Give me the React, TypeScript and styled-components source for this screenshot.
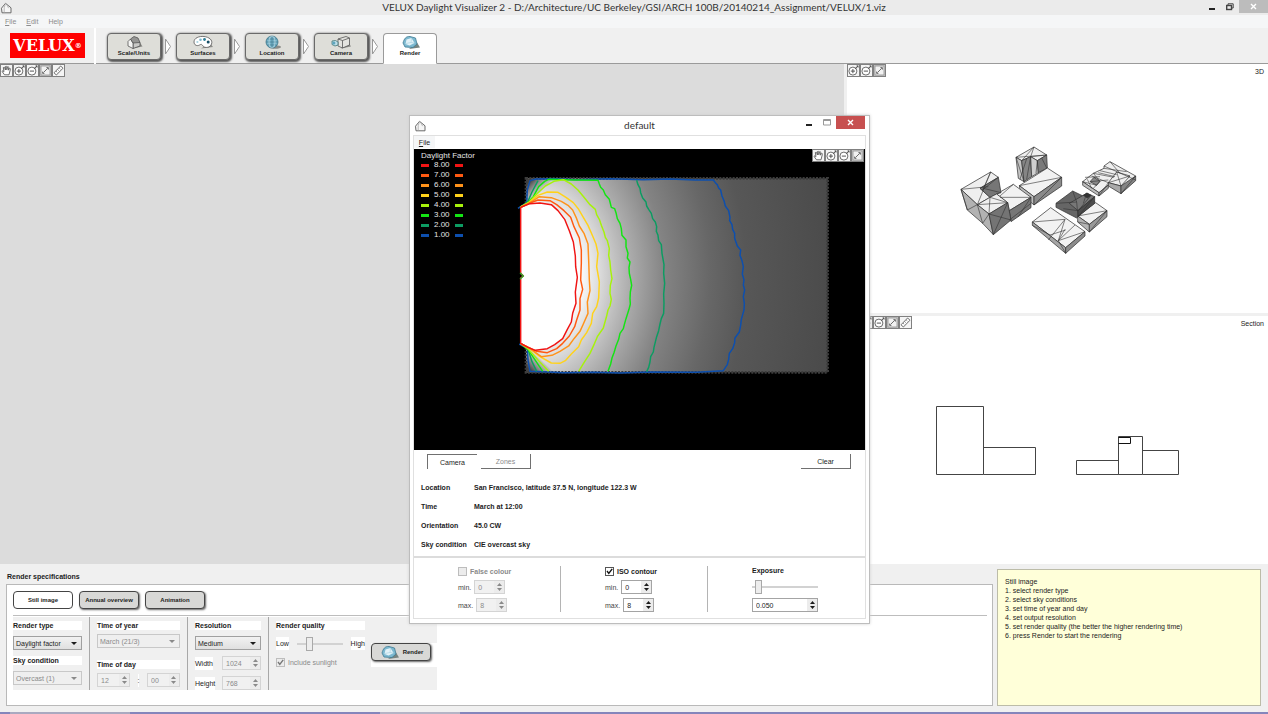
import React from "react";
import styled, { createGlobalStyle, css } from "styled-components";

const sans = `"Liberation Sans", Arial, sans-serif`;
const titleFont = `Lato, "Open Sans", sans-serif`;

const GlobalStyle = createGlobalStyle`
  *, *::before, *::after { box-sizing: border-box; }
  body { margin: 0; background: #f0f0f0; font-family: ${sans}; font-size: 7px; line-height: 9px; color: #1c1c1c; }
  button, input, select { font: inherit; color: inherit; margin: 0; padding: 0; border: 0; border-radius: 0; background: none; }
  svg { display: block; }
  h1, h2, h3, p, ol, ul, dl, dd { margin: 0; padding: 0; font: inherit; }
`;

/* ---------- frame ---------- */

const Page = styled.div`
  position: relative;
  min-height: 100vh;
  display: flex;
  flex-direction: column;
`;

const TitleBar = styled.header`
  display: grid;
  grid-template-columns: 90px 1fr 90px;
  align-items: center;
  height: 15px;
  background: #ebebeb;
`;

const WindowTitle = styled.h1`
  font-family: ${titleFont};
  font-size: 10px;
  line-height: 15px;
  text-align: center;
  color: #333;
`;

const WindowControls = styled.div`
  display: flex;
  justify-content: flex-end;
  align-self: start;
`;

const WindowButton = styled.button<{ $close?: "active" | "idle" }>`
  width: ${(p) => (p.$close ? 29 : 18)}px;
  height: 13px;
  display: flex;
  align-items: center;
  justify-content: center;
  background: ${(p) => (p.$close === "active" ? "#c75050" : p.$close ? "#bcbcbc" : "none")};
`;

const MenuBar = styled.nav`
  display: flex;
  align-items: center;
  gap: 10px;
  height: 13px;
  padding: 0 5px;
  background: #f5f6f7;
`;

const MenuItem = styled.button<{ $plain?: boolean }>`
  color: #8d8d8d;
  &::first-letter { text-decoration: ${(p) => (p.$plain ? "none" : "underline")}; }
`;

const Ribbon = styled.nav`
  display: flex;
  height: 36px;
  background: linear-gradient(#9a9a9a, #9a9a9a) bottom / 100% 1px no-repeat #f0f0f0;
`;

const LogoArea = styled.div`
  width: 96px;
  padding: 5px 0 0 10px;
  border-right: 2px solid #fff;
`;

const Logo = styled.div`
  display: flex;
  align-items: center;
  justify-content: center;
  width: 75px;
  height: 25px;
  background: #ff0000;
  color: #fff;
  font-family: "DejaVu Serif", serif;
  font-weight: 700;
  font-size: 16px;
  line-height: 25px;
`;

const Registered = styled.span`
  font-size: 7px;
  line-height: 9px;
`;

const Steps = styled.ol`
  display: flex;
  list-style: none;
  padding: 5px 0 0 11px;
`;

const Step = styled.li`
  display: flex;
`;

const Arrow = styled.svg`
  margin: 5px 5px 0 4px;
`;

const StepButton = styled.button<{ $active?: boolean }>`
  display: flex;
  flex-direction: column;
  align-items: center;
  width: 54px;
  height: 27px;
  padding-top: 1px;
  border: 1px solid #6a6a6a;
  border-radius: 4px;
  background: #deded9;
  box-shadow: 1px 1px 2px 1px #555;
  font-size: 6px;
  font-weight: 700;
  line-height: 7px;
  ${(p) =>
    p.$active &&
    css`
      height: 31px;
      background: #fff;
      border-color: #9a9a9a;
      border-bottom-color: #fff;
      border-radius: 4px 4px 0 0;
      box-shadow: none;
    `}
`;

/* ---------- workspace ---------- */

const Workspace = styled.main`
  display: grid;
  grid-template-columns: 1fr 421px;
  column-gap: 3px;
  flex: 1;
`;

const PlanPane = styled.section`
  background: #dcdcdc;
`;

const SidePanes = styled.div`
  display: grid;
  grid-template-rows: 249px 1fr;
  row-gap: 3px;
`;

const ViewPane = styled.section`
  position: relative;
  background: #fff;
`;

const ViewHeader = styled.div`
  position: absolute;
  inset: 0 4px auto 0;
  display: flex;
  justify-content: space-between;
`;

const ViewName = styled.h2`
  padding-top: 3px;
`;

const ToolRow = styled.div`
  display: flex;
`;

const ToolButton = styled.button<{ $on?: boolean }>`
  width: 13px;
  height: 13px;
  border: 1px solid #808080;
  background: ${(p) => (p.$on ? "#c4c4c4" : "#f4f4f4")};
`;

/* ---------- shared controls ---------- */

const SelectBox = styled.div<{ $disabled?: boolean }>`
  display: grid;
  align-items: center;
  height: 14px;
  border: 1px solid ${(p) => (p.$disabled ? "#c8c8c8" : "#a0a0a0")};
  background: ${(p) => (p.$disabled ? "#efefef" : "linear-gradient(#f2f2f2, #e0e0e0)")};
  color: ${(p) => (p.$disabled ? "#8a8a8a" : "#1c1c1c")};
  svg { grid-area: 1 / 1; justify-self: end; margin-right: 4px; pointer-events: none; }
`;

const NativeSelect = styled.select`
  grid-area: 1 / 1;
  width: 100%;
  height: 12px;
  padding-left: 2px;
  appearance: none;
  opacity: 1;
`;

const SpinBox = styled.span<{ $disabled?: boolean; $width: number }>`
  display: flex;
  width: ${(p) => p.$width}px;
  height: 14px;
  border: 1px solid ${(p) => (p.$disabled ? "#d4d4d4" : "#a4a4a4")};
  background: ${(p) => (p.$disabled ? "#f1f1f1" : "#fff")};
  color: ${(p) => (p.$disabled ? "#8a8a8a" : "#1c1c1c")};
`;

const SpinInput = styled.input`
  flex: 1;
  min-width: 0;
  padding-left: 3px;
  appearance: textfield;
  &::-webkit-inner-spin-button { appearance: none; margin: 0; }
`;

const SpinArrows = styled.span`
  display: flex;
  flex-direction: column;
  justify-content: center;
  gap: 2px;
  width: 10px;
  align-items: center;
  background: #ececec;
`;

const CheckLabel = styled.label<{ $disabled?: boolean; $bold?: boolean }>`
  display: flex;
  align-items: center;
  gap: 3px;
  height: 10px;
  font-weight: ${(p) => (p.$bold ? 700 : 400)};
  color: ${(p) => (p.$disabled ? "#8a8a8a" : "#1c1c1c")};
`;

const CheckMark = styled.span<{ $disabled?: boolean }>`
  display: grid;
  width: 9px;
  height: 9px;
  border: 1px solid ${(p) => (p.$disabled ? "#bdbdbd" : "#555")};
  background: ${(p) => (p.$disabled ? "#ececec" : "#fff")};
  input { grid-area: 1 / 1; width: 7px; height: 7px; appearance: none; }
  svg { grid-area: 1 / 1; pointer-events: none; }
`;

const Slider = styled.input<{ $width: number }>`
  width: ${(p) => p.$width}px;
  height: 15px;
  appearance: none;
  background: linear-gradient(#d2d2d2, #d2d2d2) center / 100% 2px no-repeat;
  &::-webkit-slider-thumb {
    appearance: none;
    width: 7px;
    height: 14px;
    border: 1px solid #a9a9a9;
    background: #ededed;
  }
`;

/* ---------- render specifications ---------- */

const SpecArea = styled.section`
  display: grid;
  grid-template-columns: 1fr 264px;
  column-gap: 4px;
  height: 148px;
  padding: 5px 7px 6px 6px;
`;

const SpecColumn = styled.div`
  display: flex;
  flex-direction: column;
`;

const SpecTitle = styled.h2`
  padding: 3px 0 3px 1px;
  font-weight: 700;
`;

const SpecBox = styled.div`
  flex: 1;
  padding: 6px 5px 0 6px;
  border: 1px solid #b9b9b9;
  background: #fff;
`;

const ModeRow = styled.div`
  display: flex;
  gap: 6px;
  padding-bottom: 6px;
  margin-bottom: 1px;
  border-bottom: 1px solid #bdbdbd;
`;

const RoundButton = styled.button<{ $pressed?: boolean }>`
  display: flex;
  align-items: center;
  justify-content: center;
  gap: 4px;
  width: 60px;
  height: 18px;
  border: 1px solid #444;
  border-radius: 4px;
  background: ${(p) => (p.$pressed ? "#fff" : "#d8d8d6")};
  box-shadow: ${(p) => (p.$pressed ? "none" : "1px 1px 2px #666")};
  font-size: 6px;
  font-weight: 700;
`;

const Groups = styled.div`
  display: flex;
  width: fit-content;
  height: 73px;
  background: #f0f0f0;
`;

const Group = styled.div<{ $width: number; $first?: boolean }>`
  display: flex;
  flex-direction: column;
  width: ${(p) => p.$width}px;
  padding: 4px 7px 0 ${(p) => (p.$first ? 0 : 7)}px;
  border-right: 1px solid #a8a8a8;
`;

const QualityGroup = styled.div`
  padding: 4px 0 0 7px;
`;

const SelectSlot = styled.div`
  margin-bottom: 6px;
`;

const GroupLabel = styled.h3<{ $gap?: number }>`
  height: 9px;
  margin-bottom: ${(p) => p.$gap ?? 6}px;
  background: #fff;
  font-weight: 700;
  white-space: nowrap;
`;

const Separator = styled.div`
  height: 1px;
  margin: 4px 0 8px;
  background: #a8a8a8;
`;

const FieldRow = styled.div`
  display: flex;
  justify-content: space-between;
  align-items: center;
  margin-bottom: 6px;
`;

const WhiteLabel = styled.label`
  padding: 2px 0;
  background: #fff;
`;

const QualityBody = styled.div`
  display: flex;
  gap: 6px;
`;

const QualityColumn = styled.div`
  width: 89px;
`;

const RenderSlot = styled.div`
  width: 66px;
  height: 24px;
  margin-top: 22px;
  background: #fff;
`;

const HelpNote = styled.aside`
  padding: 7px;
  border: 1px solid #bcbca8;
  background: #ffffd9;
`;

const TaskStrip = styled.div`
  height: 2px;
  background: linear-gradient(90deg, #8585bb 10px, #a9a9c0 10px 130px, #8585bb 130px 380px, #b4b4c6 380px 460px, #8585bb 460px);
`;

/* ---------- result window ---------- */

const ResultWindow = styled.section`
  position: absolute;
  top: 115px;
  left: 409px;
  width: 461px;
  padding: 0 4px 4px;
  border: 1px solid #bdbdbd;
  background: #fff;
  box-shadow: 0 0 3px #d0d0d0;
`;

const ResultTitleBar = styled.header`
  display: grid;
  grid-template-columns: 66px 1fr 66px;
  align-items: center;
  height: 19px;
  h2 {
    font-family: ${titleFont};
    font-size: 10px;
    text-align: center;
    color: #333;
  }
`;

const ResultBody = styled.div`
  border: solid #e0e0e0;
  border-width: 1px 0;
  box-shadow: 1px 0 0 #e0e0e0, -1px 0 0 #e0e0e0;
`;

const ResultMenu = styled.nav`
  height: 13px;
  button {
    width: 21px;
    height: 12px;
    background: #f5f6f7;
    &::first-letter { text-decoration: underline; }
  }
`;

const RenderView = styled.div`
  position: relative;
  background: #000;
  svg { max-width: 100%; }
`;

const ViewTools = styled.div`
  position: absolute;
  top: 0;
  right: 1px;
`;

const Legend = styled.div`
  position: absolute;
  top: 3px;
  left: 7px;
  color: #e4e4e4;
  font-size: 8px;
  line-height: 8px;
  white-space: nowrap;
`;

const LegendRow = styled.div<{ $color: string }>`
  display: flex;
  align-items: center;
  gap: 5px;
  height: 10px;
  &::before, &::after {
    content: "";
    width: 8px;
    height: 3px;
    margin-top: 1px;
    background: ${(p) => p.$color};
  }
`;

const TabRow = styled.div`
  display: flex;
  gap: 4px;
  padding: 4px 14px 0 13px;
`;

const FlatButton = styled.button<{ $sunken?: boolean; $muted?: boolean; $end?: boolean }>`
  width: 50px;
  height: 15px;
  border: solid #707070;
  border-width: ${(p) => (p.$sunken ? "1px 0 0 1px" : "0 1px 1px 0")};
  color: ${(p) => (p.$muted ? "#8a8a8a" : "#1c1c1c")};
  margin-left: ${(p) => (p.$end ? "auto" : 0)};
`;

const Facts = styled.dl`
  display: grid;
  grid-template-columns: 53px 1fr;
  row-gap: 10px;
  padding: 14px 7px 7px;
  border-bottom: 2px solid #dcdcdc;
  font-weight: 700;
  white-space: nowrap;
`;

const Adjustments = styled.div`
  display: grid;
  grid-template-columns: 147px 147px 1fr;
  padding: 8px 0 6px;
  height: 60px;
`;

const AdjustColumn = styled.div<{ $last?: boolean }>`
  display: flex;
  flex-direction: column;
  gap: 4px;
  height: 46px;
  padding-left: 44px;
  border-right: ${(p) => (p.$last ? 0 : 1)}px solid #b4b4b4;
  h3 { font-weight: 700; }
`;

const AdjustField = styled.label`
  display: flex;
  align-items: center;
  gap: 3px;
  height: 14px;
  color: #444;
`;

/* ---------- icons ---------- */

const HouseIcon = () => (
  <svg width="13" height="12" viewBox="0 0 13 12" fill="#f6f6f6" stroke="#6a6a6a">
    <path d="M1.5 6.2 5.5 1.3 11 5.8V10.8H2Z" />
    <path d="M5.5 1.3 4.2 5.8V10.6M7 3 8.6 6.2" stroke="#aaa" strokeWidth=".8" />
  </svg>
);

type ToolKind = "hand" | "plus" | "minus" | "fit" | "ruler";

const ToolIcon = ({ kind }: { kind: ToolKind }) => (
  <svg width="11" height="11" viewBox="0 0 11 11" fill="none" stroke="#5c5c5c" strokeWidth=".9">
    {kind === "hand" && (
      <path d="M3.5 9.8 1 6.3Q1.6 5.2 3 6.6L2.3 2.6Q3.2 1.6 3.8 3L4.4 5 4.4 1.6Q5.3.8 5.8 1.8V4.8L6.5 1.8Q7.5 1.3 7.7 2.3L7.4 5.2 8.6 3.4Q9.7 3.3 9.3 4.6L8 9.8Z" fill="#fff" />
    )}
    {(kind === "plus" || kind === "minus") && (
      <>
        <circle cx="4.9" cy="6.1" r="4" fill="#fff" />
        <path d="M2.8 6.1H7M7.2 3.8 10 .8M8.6 .9H10V2.6" stroke="#444" />
        {kind === "plus" && <path d="M4.9 4V8.2" stroke="#444" />}
      </>
    )}
    {kind === "fit" && (
      <>
        <rect x="1" y="1" width="9" height="9" fill="#f2f2f2" stroke="#999" />
        <path d="M3.4 7.6 7.8 3.2M6.4 2.6H8.4V4.6M2.6 6.6V8.4H4.4" />
      </>
    )}
    {kind === "ruler" && (
      <>
        <path d="M1 7.8 7.6 1 10 3.2 3.4 10Z" fill="#fff" />
        <path d="M3 6.2 4.2 7.2M4.6 4.6 5.8 5.6M6.2 3 7.4 4" strokeWidth=".7" />
      </>
    )}
  </svg>
);

const toolNames: Record<ToolKind, string> = {
  hand: "Pan",
  plus: "Zoom in",
  minus: "Zoom out",
  fit: "Fit view",
  ruler: "Measure",
};

const Tools = ({ kinds }: { kinds: ToolKind[] }) => (
  <ToolRow>
    {kinds.map((k) => (
      <ToolButton key={k} $on={k === "fit"} aria-label={toolNames[k]}>
        <ToolIcon kind={k} />
      </ToolButton>
    ))}
  </ToolRow>
);

const StepIcon = ({ name }: { name: string }) => (
  <svg width="20" height="15" viewBox="0 0 20 15" stroke="#555" strokeWidth=".8" fill="none">
    {name === "Scale/Units" && (
      <>
        <path d="M9 13.5 18.5 11.5 16 7.5Z" fill="#8c8c88" stroke="none" />
        <path d="M9 8 12 4.5 16 7.5V11L9 13.5Z" fill="#c9c9c6" />
        <path d="M4 6.5 6.5 4 9 8V13.5L4 11Z" fill="#f4f4f2" />
        <path d="M6.5 4 10 1.5 14 3 16 7.5 9 8Z" fill="#959593" />
      </>
    )}
    {name === "Surfaces" && (
      <>
        <path d="M8 13.5 20 12 17 8Z" fill="#8c8c88" stroke="none" />
        <path d="M1 7C1 3 6 1 11 1.5S20 5 18.5 9 12 13 10.5 11.5 9 8.5 6.5 10 1 10 1 7Z" fill="#fff" />
        <g stroke="none" fill="#2f7f98">
          <circle cx="7.5" cy="4.8" r="1.3" fill="#7bb8cc" />
          <circle cx="11.5" cy="4.5" r="1.4" />
          <circle cx="15.2" cy="7" r="1.5" fill="#174f66" />
          <circle cx="4.4" cy="7" r="1.1" fill="#a7d3e0" />
        </g>
      </>
    )}
    {name === "Location" && (
      <>
        <ellipse cx="13" cy="12" rx="6" ry="1.8" fill="#8c8c88" stroke="none" />
        <circle cx="10" cy="7" r="6" fill="#78b4c9" stroke="#3b7488" />
        <path d="M4 7H16M10 1V13M5 4H15M5 10H15" stroke="#3b7488" strokeWidth=".6" />
        <ellipse cx="10" cy="7" rx="3" ry="6" stroke="#d6ecf3" strokeWidth=".6" />
      </>
    )}
    {name === "Camera" && (
      <>
        <path d="M10 13.5 20 11.5 18 8Z" fill="#8c8c88" stroke="none" />
        <path d="M7 4 15 1.5 18.5 3V10L11.5 13 7 11Z" fill="#e4e4e0" />
        <path d="M7 4 11.5 5.5V13M11.5 5.5 18.5 3" />
        <path d="M1 6 4.5 5.5 7 7V10L4 11 1 9.5Z" fill="#bcdde8" stroke="#477" />
        <circle cx="2.8" cy="8" r="1.6" fill="#5ea5bd" stroke="none" />
      </>
    )}
    {name === "Render" && (
      <>
        <path d="M9 14 20 12.5 17 7.5Z" fill="#77837f" stroke="none" />
        <path d="M3 8C4 4 6 1 10 1.5L15.5 3 17 9 13 12.5 5 12Z" fill="#7db9d0" stroke="#3d7a92" />
        <path d="M6.5 4.5 11.5 3 14.5 8 9.5 10.5 5.5 9Z" fill="#e2f2f8" stroke="none" />
        <path d="M11.5 3 11 7.5 14.5 8M11 7.5 6 8.5" stroke="#a5cfde" strokeWidth=".6" />
      </>
    )}
  </svg>
);

const Caret = () => (
  <svg width="6" height="3" viewBox="0 0 6 3" fill="currentColor"><path d="M0 0H6L3 3Z" /></svg>
);

const Dropdown = ({ label, value, disabled }: { label: string; value: string; disabled?: boolean }) => (
  <SelectBox $disabled={disabled}>
    <NativeSelect aria-label={label} disabled={disabled} defaultValue={value}>
      <option>{value}</option>
    </NativeSelect>
    <Caret />
  </SelectBox>
);

const Spin = ({ id, label, value, width, disabled }: { id: string; label?: string; value: string; width: number; disabled?: boolean }) => (
  <SpinBox $disabled={disabled} $width={width}>
    <SpinInput id={id} aria-label={label} type="number" step="any" defaultValue={value} disabled={disabled} />
    <SpinArrows>
      <svg width="5" height="3" viewBox="0 0 5 3" fill="currentColor"><path d="M0 3 2.5 0 5 3Z" /></svg>
      <svg width="5" height="3" viewBox="0 0 5 3" fill="currentColor"><path d="M0 0 2.5 3 5 0Z" /></svg>
    </SpinArrows>
  </SpinBox>
);

const Check = ({ text, checked, disabled, bold }: { text: string; checked?: boolean; disabled?: boolean; bold?: boolean }) => (
  <CheckLabel $disabled={disabled} $bold={bold}>
    <CheckMark $disabled={disabled}>
      <input type="checkbox" defaultChecked={checked} disabled={disabled} />
      {checked && (
        <svg width="7" height="7" viewBox="0 0 7 7" fill="none" stroke={disabled ? "#777" : "#111"} strokeWidth="1.4">
          <path d="M1 3 2.8 5.4 6.2 .8" />
        </svg>
      )}
    </CheckMark>
    {text}
  </CheckLabel>
);

const Minimize = () => (
  <svg width="7" height="7" viewBox="0 0 7 7"><path d="M0 6H6" stroke="#222" strokeWidth="2" /></svg>
);
const Cross = () => (
  <svg width="7" height="7" viewBox="0 0 7 7"><path d="M1 1 6 6M6 1 1 6" stroke="#fff" strokeWidth="1.4" /></svg>
);
const Maximize = () => (
  <svg width="8" height="7" viewBox="0 0 8 7"><path d="M.5 .5H7.5V6H.5ZM.5 1.5H7.5" fill="none" stroke="#999" /></svg>
);
const Restore = () => (
  <svg width="8" height="8" viewBox="0 0 8 8" fill="none" stroke="#444">
    <path d="M2 2V.8H7.2V5H6" />
    <rect x=".7" y="2.5" width="4.8" height="4" strokeWidth="1.4" />
  </svg>
);

/* ---------- drawings ---------- */

const contours: { color: string; d: string }[] = [
  { color: "#0d4fae", d: "M24 115 50 98 52 60 60 32 78 27 130 26 200 29 300 26 400 29 480 27 555 30 610 30 616 38 622 44 626 54 632 60 636 78 642 92 646 108 656 122 660 142 659 152 666 164 668 178 674 190 674 205 682 228 692 240 690 256 696 272 700 290 697 312 702 330 700 345 704 360 700 380 703 400 702 420 694 448 692 466 688 486 675 504 674 518 668 536 658 550 656 568 652 584 640 602 560 607 420 606 330 609 250 607 160 608 100 605 60 604 54 570 52 536 28 522" },
  { color: "#0c9c62", d: "M380 31 384 44 390 55 392 68 398 84 408 96 410 108 416 118 424 130 428 146 436 156 440 170 439 184 444 196 446 212 454 224 456 250 462 284 461 310 464 340 461 372 462 400 461 430 454 446 450 462 446 482 440 500 432 532 430 546 422 560 420 576 416 592 410 605" },
  { color: "#0c9c62", d: "M32 112 52 98 66 66 84 32M36 522 54 538 66 575 80 604" },
  { color: "#13e413", d: "M30 112 52 99 70 80 86 50 104 34 116 28 190 30 264 31 268 42 272 52 280 60 286 74 298 88 300 96 304 112 314 116 318 128 322 146 330 160 334 176 336 196 348 210 348 230 354 250 352 264 360 276 357 292 358 310 362 328 365 346 361 366 360 386 361 402 357 418 348 446 344 460 340 476 330 490 326 508 318 528 312 548 306 564 302 582 294 604M34 522 54 538 70 562 98 604" },
  { color: "#a6f20b", d: "M32 111 56 98 80 72 106 48 132 34 160 29 184 42 204 60 222 82 240 104 256 118 260 134 268 148 274 166 282 186 286 202 292 212 298 236 296 256 300 276 302 300 306 326 301 346 300 370 304 388 300 408 294 420 290 438 280 474 262 500 252 524 240 550 222 578 206 604M32 522 54 536 84 570 116 604" },
  { color: "#ffd21a", d: "M32 111 56 98 84 76 112 66 144 67 168 82 190 98 206 118 220 142 234 166 248 198 258 222 264 250 260 290 268 336 266 384 260 410 248 430 244 460 230 488 214 510 206 530 184 552 166 572 150 580 124 579 90 560 60 536 32 521" },
  { color: "#ff921a", d: "M32 112 60 98 88 80 124 83 154 94 174 106 188 120 200 146 208 168 222 190 234 222 236 270 238 330 240 362 232 396 234 430 220 462 210 484 192 506 176 528 150 544 126 556 94 560 60 536 34 522" },
  { color: "#ff5a12", d: "M32 112 60 99 84 90 120 92 140 104 162 122 182 142 192 170 208 204 214 240 214 280 212 330 218 358 210 386 210 420 200 450 194 470 178 498 158 520 140 536 112 548 80 544 56 532 34 522" },
  { color: "#f01414", d: "M32 112 60 101 90 99 124 104 144 122 164 148 178 182 190 216 196 258 197 290 202 322 196 366 198 400 188 430 184 456 172 478 158 506 134 524 112 536 76 541 54 532 32 520V324L40 318 32 310V112" },
];

const ContourRender = () => (
  <svg width="451" height="301" viewBox="0 0 451 301" role="img" aria-label="Daylight factor contours">
    <defs>
      <radialGradient id="field" gradientUnits="userSpaceOnUse" cx="0" cy="0" r="900" gradientTransform="translate(60 315) scale(1 1.25)">
        <stop offset=".16" stopColor="#fff" />
        <stop offset=".21" stopColor="#e6e6e6" />
        <stop offset=".27" stopColor="#c8c8c8" />
        <stop offset=".34" stopColor="#aaa" />
        <stop offset=".45" stopColor="#838383" />
        <stop offset=".6" stopColor="#676767" />
        <stop offset=".72" stopColor="#575757" />
        <stop offset="1" stopColor="#4b4b4b" />
      </radialGradient>
      <linearGradient id="cornerTop" x1="0" y1="0" x2=".6" y2=".6">
        <stop offset=".2" stopColor="#444" />
        <stop offset="1" stopColor="#999" stopOpacity="0" />
      </linearGradient>
      <linearGradient id="cornerBottom" x1="0" y1="1" x2=".6" y2=".4">
        <stop offset=".2" stopColor="#444" />
        <stop offset="1" stopColor="#999" stopOpacity="0" />
      </linearGradient>
    </defs>
    <g transform="translate(96 21) scale(.33333)">
      <rect x="48" y="25" width="905" height="582" fill="url(#field)" />
      <path d="M48 25H130L48 110Z" fill="url(#cornerTop)" />
      <path d="M48 607H130L48 525Z" fill="url(#cornerBottom)" />
      <rect x="48" y="25" width="905" height="582" fill="none" stroke="#3c3c3c" strokeWidth="8" strokeDasharray="6 4" />
      <path d={contours[8].d} fill="#fff" />
      {contours.map((c, i) => (
        <path key={i} d={c.d} fill="none" stroke={c.color} strokeWidth="4.4" strokeLinejoin="round" />
      ))}
      <path d="M30 308 40 318 30 328" fill="none" stroke="#2fae2f" strokeWidth="4" />
    </g>
  </svg>
);

const faces: [string, string][] = [
  ["#efefef", "198,52 252,21 290,45 262,62 242,50 215,62"],
  ["#c4c4c4", "198,52 215,62 222,125 205,115"],
  ["#858585", "215,62 242,50 245,110 222,125"],
  ["#cfcfcf", "242,50 262,62 265,98 245,110"],
  ["#7a7a7a", "262,62 290,45 292,84 265,98"],
  ["#f2f2f2", "208,137 292,84 335,112 252,170"],
  ["#bdbdbd", "208,137 252,170 252,195 212,160"],
  ["#8a8a8a", "252,170 335,112 335,138 252,195"],
  ["#f2f2f2", "140,162 190,133 243,172 178,212 173,188"],
  ["#777777", "178,212 243,172 243,203 183,245"],
  ["#efefef", "33,148 122,96 145,112 90,145 120,172 82,194"],
  ["#767676", "145,112 153,158 140,162 120,172 90,145"],
  ["#efefef", "120,172 140,162 173,188 117,222 82,194"],
  ["#b2b2b2", "33,148 82,194 117,222 130,284 98,250 52,210"],
  ["#747474", "117,222 173,188 183,240 130,284"],
  ["#f2f2f2", "247,246 302,203 405,275 347,323"],
  ["#a6a6a6", "247,246 347,323 347,340 247,256"],
  ["#8c8c8c", "347,323 405,275 405,288 347,340"],
  ["#f2f2f2", "383,228 437,188 471,212 418,253"],
  ["#b4b4b4", "383,228 418,253 418,276 383,246"],
  ["#999999", "418,253 471,212 471,230 418,276"],
  ["#666666", "318,190 368,153 434,185 380,234 318,202"],
  ["#777777", "358,190 410,160 434,170 384,212"],
  ["#4c4c4c", "384,212 434,170 434,190 384,230"],
  ["#333333", "400,166 411,159 424,166 412,174"],
  ["#efefef", "398,125 430,100 462,85 462,78 480,65 557,108 515,150 475,135 447,158"],
  ["#bdbdbd", "398,125 447,158 447,168 398,136"],
  ["#a0a0a0", "447,158 475,135 475,145 447,168"],
  ["#eeeeee", "475,128 500,96 540,108 513,138"],
  ["#aaaaaa", "475,128 513,138 513,161 475,138"],
  ["#858585", "513,138 557,108 557,122 513,161"],
  ["#888888", "420,125 432,112 450,124 440,136"],
];

const creases =
  "M33 148 115 140M122 96 82 194M122 96 98 150M33 148 52 210M52 210 82 194 98 250M82 194 173 188M120 172 117 222 98 250M120 172 173 188M117 222 183 240M173 188 130 284M145 112 97 150M153 158 100 145M190 133 150 168M150 172 243 172M178 240 243 190M243 172 205 230M252 21 242 50M252 21 215 62M198 52 290 45M242 50 290 45M198 52 222 125M230 56 210 118M242 50 230 118M262 62 258 100M275 54 290 84M208 137 335 112M252 195 335 112M247 246 345 238 295 300M345 238 325 302 405 275M375 255 325 302 345 268M300 285 347 270M325 302 347 340M247 256 300 285M383 228 471 212M418 276 471 212M383 246 418 253M318 190 380 186 368 153M340 206 384 212M380 186 384 230M384 230 434 170M400 190 410 160M384 212 420 170M462 78 557 120M480 65 510 100M462 85 530 95M450 92 500 104M445 98 495 110M430 100 492 112M425 108 475 128M500 96 513 138M475 128 540 108M513 161 557 108M420 125 475 120M398 125 440 136M450 124 430 145M430 100 450 124M412 118 425 145M447 168 475 128M405 112 450 110";

const Model3D = () => (
  <svg width="421" height="249" viewBox="0 0 421 249" role="img" aria-label="3D model">
    <g transform="translate(103 76) scale(.33333)" stroke="#333" strokeWidth="2.2" strokeLinejoin="round">
      {faces.map(([fill, points], i) => (
        <polygon key={i} fill={fill} points={points} />
      ))}
      <path d={creases} fill="none" strokeWidth="1.8" />
    </g>
  </svg>
);

const SectionDrawing = () => (
  <svg width="421" height="248" viewBox="0 0 421 248" role="img" aria-label="Section drawing" fill="none" stroke="#444">
    <path d="M89.5 90.5H136.5V158.5H89.5ZM136.5 131.5H188.5V158.5H136.5" />
    <path d="M229.5 144.5H271.5V158.5H229.5ZM271.5 120.5H295.5V158.5H271.5ZM295.5 134.5H331.5V158.5H295.5" />
    <path d="M271.5 121.5H283.5V127.5H271.5" stroke="#111" />
  </svg>
);

/* ---------- data ---------- */

const steps = ["Scale/Units", "Surfaces", "Location", "Camera", "Render"];

const legend: [string, string][] = [
  ["8.00", "#f01414"],
  ["7.00", "#ff5a12"],
  ["6.00", "#ff921a"],
  ["5.00", "#ffd21a"],
  ["4.00", "#a6f20b"],
  ["3.00", "#13e413"],
  ["2.00", "#0c9c62"],
  ["1.00", "#0d4fae"],
];

const facts: [string, string][] = [
  ["Location", "San Francisco, latitude 37.5 N, longitude 122.3 W"],
  ["Time", "March at 12:00"],
  ["Orientation", "45.0 CW"],
  ["Sky condition", "CIE overcast sky"],
];

const help = [
  "Still image",
  "1. select render type",
  "2. select sky conditions",
  "3. set time of year and day",
  "4. set output resolution",
  "5. set render quality (the better the higher rendering time)",
  "6. press Render to start the rendering",
];

/* ---------- app ---------- */

const ResultDialog = () => (
  <ResultWindow>
    <ResultTitleBar>
      <HouseIcon />
      <h2>default</h2>
      <WindowControls>
        <WindowButton aria-label="Minimize"><Minimize /></WindowButton>
        <WindowButton aria-label="Maximize"><Maximize /></WindowButton>
        <WindowButton $close="active" aria-label="Close"><Cross /></WindowButton>
      </WindowControls>
    </ResultTitleBar>
    <ResultBody>
      <ResultMenu><button>File</button></ResultMenu>
      <RenderView>
        <ContourRender />
        <Legend>
          <div>Daylight Factor</div>
          {legend.map(([value, color]) => (
            <LegendRow key={value} $color={color}>{value}</LegendRow>
          ))}
        </Legend>
        <ViewTools><Tools kinds={["hand", "plus", "minus", "fit"]} /></ViewTools>
      </RenderView>
      <TabRow>
        <FlatButton $sunken>Camera</FlatButton>
        <FlatButton $muted>Zones</FlatButton>
        <FlatButton $end>Clear</FlatButton>
      </TabRow>
      <Facts>
        {facts.map(([k, v]) => (
          <React.Fragment key={k}>
            <dt>{k}</dt>
            <dd>{v}</dd>
          </React.Fragment>
        ))}
      </Facts>
      <Adjustments>
        <AdjustColumn>
          <Check text="False colour" disabled bold />
          <AdjustField>min. <Spin id="fc-min" value="0" width={31} disabled /></AdjustField>
          <AdjustField>max. <Spin id="fc-max" value="8" width={31} disabled /></AdjustField>
        </AdjustColumn>
        <AdjustColumn>
          <Check text="ISO contour" checked bold />
          <AdjustField>min. <Spin id="iso-min" value="0" width={31} /></AdjustField>
          <AdjustField>max. <Spin id="iso-max" value="8" width={31} /></AdjustField>
        </AdjustColumn>
        <AdjustColumn $last>
          <h3>Exposure</h3>
          <Slider $width={66} type="range" min="0" max="100" defaultValue="5" aria-label="Exposure" />
          <Spin id="exposure" label="Exposure value" value="0.050" width={66} />
        </AdjustColumn>
      </Adjustments>
    </ResultBody>
  </ResultWindow>
);

export default function App() {
  return (
    <Page>
      <GlobalStyle />
      <TitleBar>
        <HouseIcon />
        <WindowTitle>VELUX Daylight Visualizer 2 - D:/Architecture/UC Berkeley/GSI/ARCH 100B/20140214_Assignment/VELUX/1.viz</WindowTitle>
        <WindowControls>
          <WindowButton aria-label="Minimize"><Minimize /></WindowButton>
          <WindowButton aria-label="Restore"><Restore /></WindowButton>
          <WindowButton $close="idle" aria-label="Close"><Cross /></WindowButton>
        </WindowControls>
      </TitleBar>
      <MenuBar>
        <MenuItem>File</MenuItem>
        <MenuItem>Edit</MenuItem>
        <MenuItem $plain>Help</MenuItem>
      </MenuBar>
      <Ribbon>
        <LogoArea><Logo>VELUX<Registered>®</Registered></Logo></LogoArea>
        <Steps>
          {steps.map((name, i) => (
            <Step key={name}>
              <StepButton $active={name === "Render"}>
                <StepIcon name={name} />
                {name}
              </StepButton>
              {i < steps.length - 1 && (
                <Arrow width="6" height="17" viewBox="0 0 6 17" fill="#fff" stroke="#999">
                  <path d="M.5 1 5.5 8.5 .5 16Z" />
                </Arrow>
              )}
            </Step>
          ))}
        </Steps>
      </Ribbon>

      <Workspace>
        <PlanPane><Tools kinds={["hand", "plus", "minus", "fit", "ruler"]} /></PlanPane>
        <SidePanes>
          <ViewPane>
            <Model3D />
            <ViewHeader><Tools kinds={["plus", "minus", "fit"]} /><ViewName>3D</ViewName></ViewHeader>
          </ViewPane>
          <ViewPane>
            <SectionDrawing />
            <ViewHeader><Tools kinds={["hand", "plus", "minus", "fit", "ruler"]} /><ViewName>Section</ViewName></ViewHeader>
          </ViewPane>
        </SidePanes>
      </Workspace>

      <SpecArea>
        <SpecColumn>
          <SpecTitle>Render specifications</SpecTitle>
          <SpecBox>
            <ModeRow>
              <RoundButton $pressed>Still image</RoundButton>
              <RoundButton>Annual overview</RoundButton>
              <RoundButton>Animation</RoundButton>
            </ModeRow>
            <Groups>
              <Group $width={77} $first>
                <GroupLabel>Render type</GroupLabel>
                <SelectSlot><Dropdown label="Render type" value="Daylight factor" /></SelectSlot>
                <GroupLabel>Sky condition</GroupLabel>
                <Dropdown label="Sky condition" value="Overcast (1)" disabled />
              </Group>
              <Group $width={98}>
                <GroupLabel $gap={4}>Time of year</GroupLabel>
                <Dropdown label="Time of year" value="March (21/3)" disabled />
                <Separator />
                <GroupLabel $gap={4}>Time of day</GroupLabel>
                <FieldRow>
                  <Spin id="hour" label="Hour" value="12" width={33} disabled />
                  <WhiteLabel as="span">:</WhiteLabel>
                  <Spin id="minute" label="Minute" value="00" width={33} disabled />
                </FieldRow>
              </Group>
              <Group $width={81}>
                <GroupLabel>Resolution</GroupLabel>
                <SelectSlot><Dropdown label="Resolution" value="Medium" /></SelectSlot>
                <FieldRow><WhiteLabel htmlFor="width">Width</WhiteLabel><Spin id="width" value="1024" width={39} disabled /></FieldRow>
                <FieldRow><WhiteLabel htmlFor="height">Height</WhiteLabel><Spin id="height" value="768" width={39} disabled /></FieldRow>
              </Group>
              <QualityGroup>
                <QualityBody>
                  <QualityColumn>
                    <GroupLabel>Render quality</GroupLabel>
                    <FieldRow>
                      <WhiteLabel htmlFor="quality">Low</WhiteLabel>
                      <Slider id="quality" $width={46} type="range" min="0" max="100" defaultValue="25" />
                      <WhiteLabel as="span">High</WhiteLabel>
                    </FieldRow>
                    <Check text="Include sunlight" checked disabled />
                  </QualityColumn>
                  <RenderSlot>
                    <RoundButton><StepIcon name="Render" />Render</RoundButton>
                  </RenderSlot>
                </QualityBody>
              </QualityGroup>
            </Groups>
          </SpecBox>
        </SpecColumn>
        <HelpNote>
          {help.map((line) => (
            <p key={line}>{line}</p>
          ))}
        </HelpNote>
      </SpecArea>
      <TaskStrip />

      <ResultDialog />
    </Page>
  );
}
